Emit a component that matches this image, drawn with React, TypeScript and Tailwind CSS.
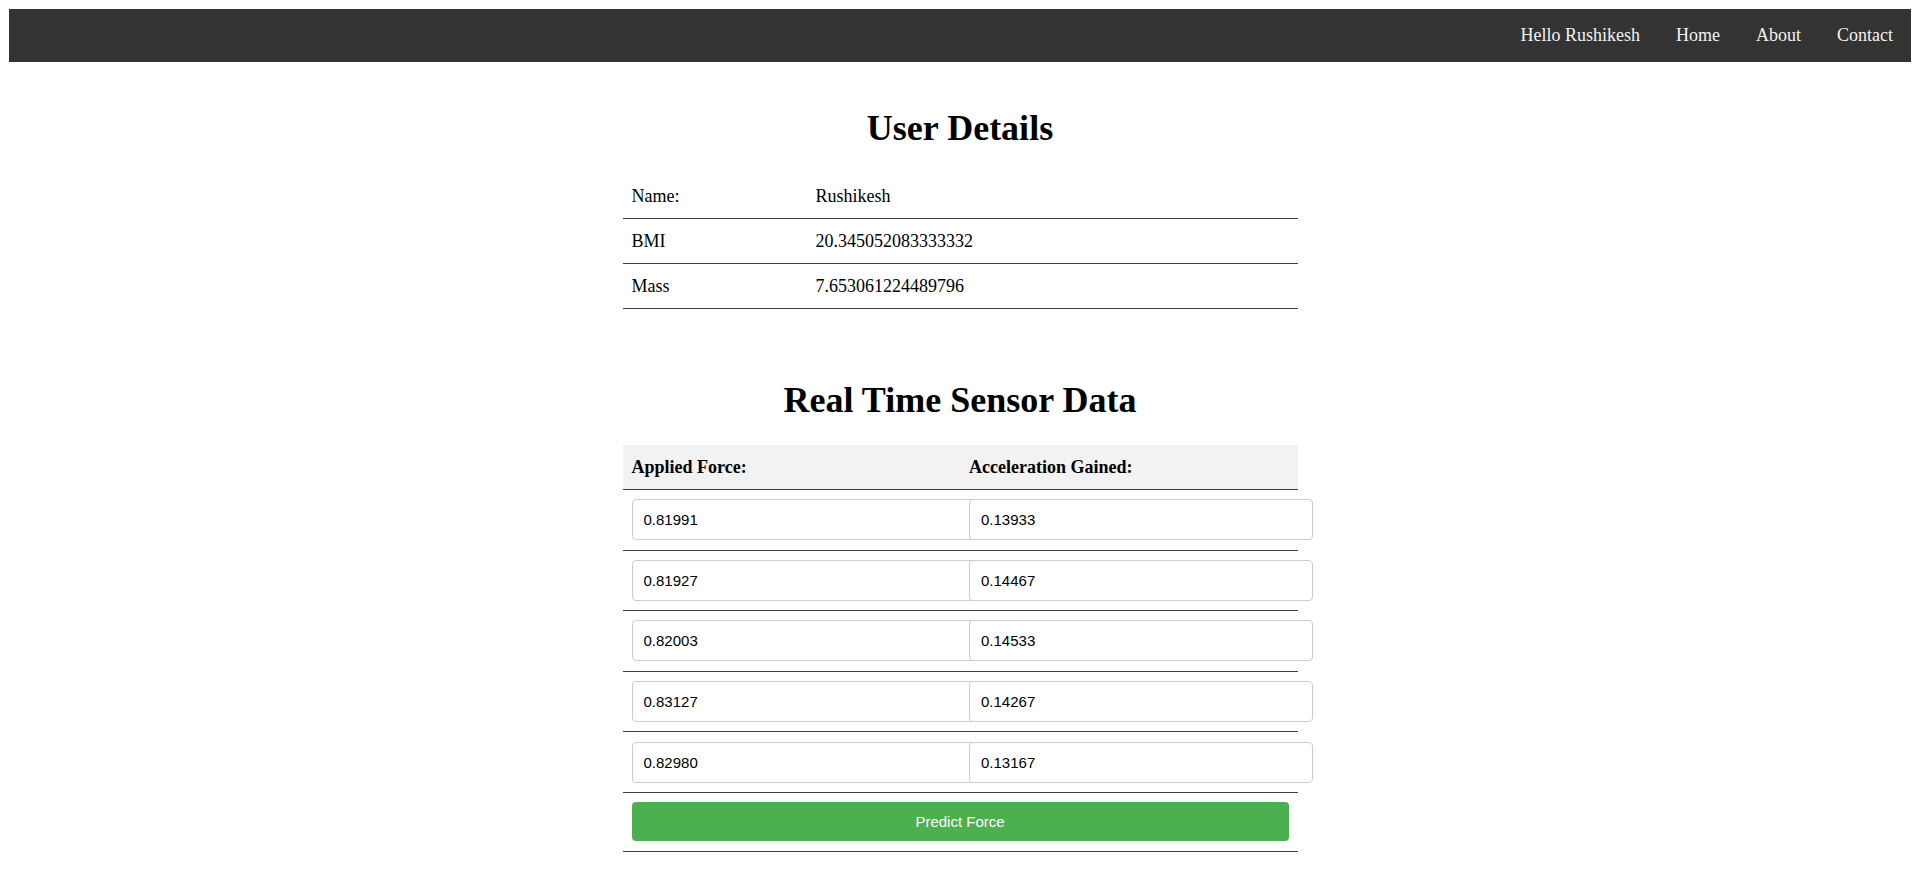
import { useState } from "react";

// Sensor readings shown in the table
const readings = [
  { force: "0.81991", accel: "0.13933" },
  { force: "0.81927", accel: "0.14467" },
  { force: "0.82003", accel: "0.14533" },
  { force: "0.83127", accel: "0.14267" },
  { force: "0.82980", accel: "0.13167" },
];

const userRows = [
  { label: "Name:", value: "Rushikesh" },
  { label: "BMI", value: "20.345052083333332" },
  { label: "Mass", value: "7.653061224489796" },
];

const Navbar = () => {
  const links = ["Hello Rushikesh", "Home", "About", "Contact"];
  return (
    <nav className="flex justify-end bg-[#333]">
      {links.map((link) => (
        <a
          key={link}
          href="#"
          className="px-[18px] py-[16px] text-[18px] leading-[21px] text-[#f2f2f2] no-underline"
        >
          {link}
        </a>
      ))}
    </nav>
  );
};

// Input that overflows its cell, like a content-box width: 100% input
const SensorInput = ({ value }: { value: string }) => (
  <input
    type="text"
    readOnly
    value={value}
    className="box-border block h-[41px] w-[calc(100%+24px)] rounded-[4px] border border-[#ccc] bg-white px-[11px] font-['Liberation_Sans',Arial,sans-serif] text-[15px] text-black outline-none"
  />
);

const UserDetails = () => (
  <section>
    <h1 className="mt-6 mb-[25px] text-center text-[36px] font-bold leading-[41px]">
      User Details
    </h1>
    <table className="mx-auto w-[675px] table-fixed border-collapse">
      <colgroup>
        <col className="w-[184px]" />
        <col />
      </colgroup>
      <tbody>
        {userRows.map((row) => (
          <tr key={row.label}>
            <td className="border-b border-[#3f3f46] px-[9px] py-[11px] text-left leading-[22px]">
              {row.label}
            </td>
            <td className="border-b border-[#3f3f46] px-[9px] py-[11px] text-left leading-[22px]">
              {row.value}
            </td>
          </tr>
        ))}
      </tbody>
    </table>
  </section>
);

const SensorData = () => {
  const [rows] = useState(readings);
  return (
    <section className="mt-[71px]">
      <h2 className="my-6 text-center text-[36px] font-bold leading-[41px]">
        Real Time Sensor Data
      </h2>
      <table className="mx-auto w-[675px] table-fixed border-collapse">
        <thead>
          <tr className="bg-[#f2f2f2]">
            <th className="border-b border-[#3f3f46] px-[9px] py-[11px] text-left font-bold leading-[22px]">
              Applied Force:
            </th>
            <th className="border-b border-[#3f3f46] px-[9px] py-[11px] text-left font-bold leading-[22px]">
              Acceleration Gained:
            </th>
          </tr>
        </thead>
        <tbody>
          {rows.map((r, i) => (
            <tr key={i}>
              <td className="border-b border-[#3f3f46] px-[9px] py-[9.3px]">
                <SensorInput value={r.force} />
              </td>
              <td className="border-b border-[#3f3f46] px-[9px] py-[9.3px]">
                <SensorInput value={r.accel} />
              </td>
            </tr>
          ))}
          <tr>
            <td colSpan={2} className="border-b border-[#3f3f46] px-[9px] py-[9.3px]">
              <button className="block h-[39px] w-full cursor-pointer rounded-[4px] bg-[#4caf50] font-['Liberation_Sans',Arial,sans-serif] text-[15px] text-white">
                Predict Force
              </button>
            </td>
          </tr>
        </tbody>
      </table>
    </section>
  );
};

const App = () => {
  return (
    <div className="m-[9px] font-['Liberation_Serif','Times_New_Roman',serif] text-[18px] text-black">
      <Navbar />
      <main className="pt-[22px]">
        <UserDetails />
        <SensorData />
      </main>
    </div>
  );
};

export default App;
